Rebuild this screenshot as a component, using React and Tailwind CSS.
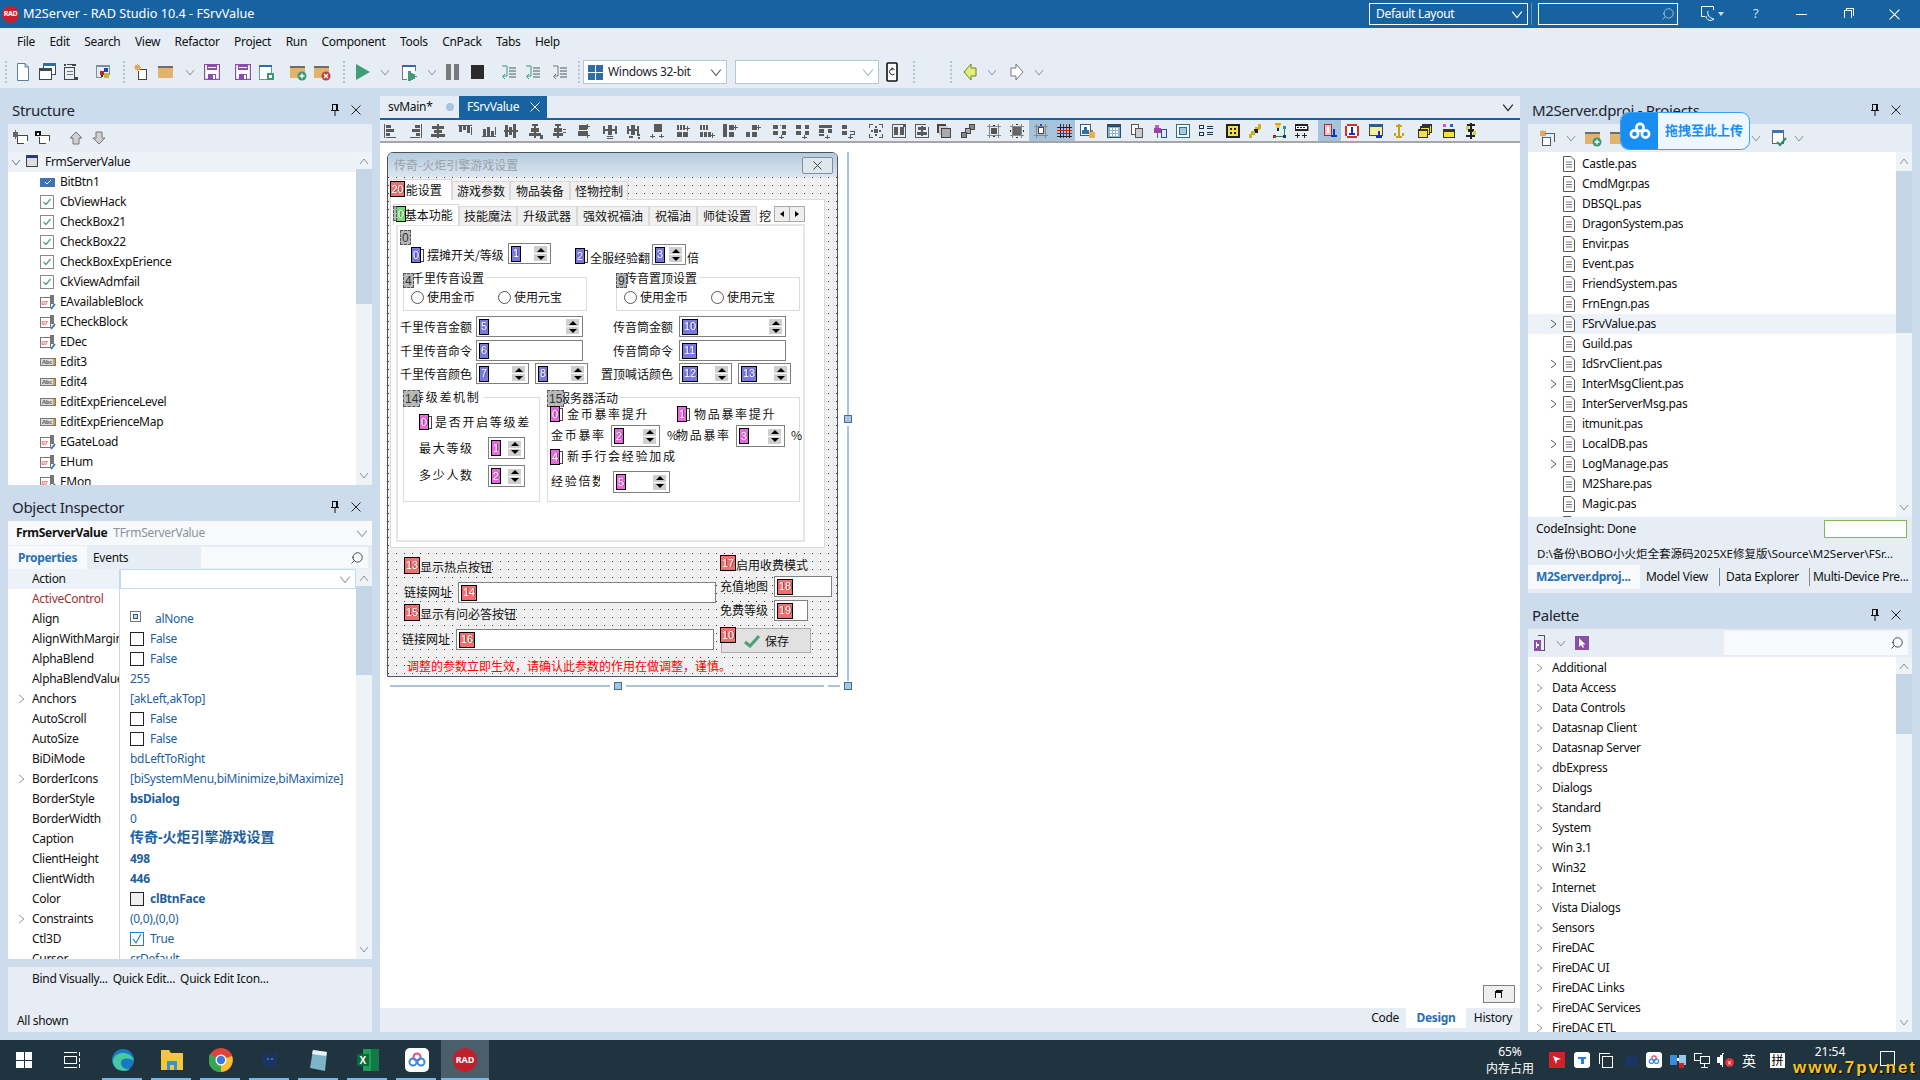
import { Search } from "lucide-react"

// tiny pixel icons: "x y w h color;..."
function Px({ r, size = 16, className = "" }) {
  return (
    <svg width={size} height={size} viewBox="0 0 16 16" shapeRendering="crispEdges" className={"shrink-0 " + className}>
      {r.split(";").map((p, i) => {
        const [x, y, w, h, c] = p.trim().split(" ")
        return <rect key={i} x={x} y={y} width={w} height={h} fill={c || "#5a5a5a"} />
      })}
    </svg>
  )
}

function Chev({ dir = "down", color = "#8a9299", size = 10, className = "" }) {
  const pts = { down: "1,3 5,8 9,3", right: "3,1 8,5 3,9", up: "1,7 5,2 9,7" }[dir]
  return (
    <svg width={size} height={size} viewBox="0 0 10 10" className={"shrink-0 " + className}>
      <polyline points={pts} fill="none" stroke={color} strokeWidth="1" />
    </svg>
  )
}

function CloseX({ color = "#222", size = 10 }) {
  return (
    <svg width={size} height={size} viewBox="0 0 10 10" className="shrink-0">
      <path d="M0.5 0.5L9.5 9.5M9.5 0.5L0.5 9.5" stroke={color} strokeWidth="1" fill="none" />
    </svg>
  )
}

function Pin() {
  return (
    <svg width="8" height="12" viewBox="0 0 8 12" className="shrink-0">
      <path d="M1 0.5H7M1.5 0.5V6.5M5.5 0.5V6.5M6.5 0.5V6.5M0 6.5H8M4 7V12" stroke="#111" fill="none" />
    </svg>
  )
}

function PanelHead({ title, className = "" }) {
  return (
    <div className={"flex items-center justify-between pl-[4px] pr-[11px] text-[15px] text-[#1c2530] " + className}>
      <span>{title}</span>
      <div className="flex items-center gap-[12px]">
        <Pin />
        <CloseX />
      </div>
    </div>
  )
}

function Scroll({ thumbClass }) {
  return (
    <div className="w-[16px] shrink-0 bg-[#eef3f8] relative flex flex-col items-center justify-between py-[5px] self-stretch">
      <Chev dir="up" />
      <div className={"absolute left-0 w-[16px] bg-[#c4d6e6] " + thumbClass} />
      <Chev dir="down" />
    </div>
  )
}

/* ---- main toolbar icons ---- */
function Doc({ color = "#5b7f9e", className = "" }) {
  return (
    <svg width="16" height="18" viewBox="0 0 16 18" className={"shrink-0 " + className}>
      <path d="M2.5 0.5H10L13.5 4V17.5H2.5Z M10 0.5V4H13.5" fill="#fff" stroke={color} />
    </svg>
  )
}
function Win({ badge }) {
  return (
    <svg width="17" height="18" viewBox="0 0 17 18" className="shrink-0">
      <rect x="4.5" y="0.5" width="12" height="11" fill="#fff" stroke="#3d4a55" />
      <rect x="4" y="0" width="13" height="3" fill="#2f6ea5" />
      <rect x="0.5" y="5.5" width="12" height="11" fill="#fff" stroke="#3d4a55" />
      <rect x="0" y="5" width="13" height="3" fill={badge || "#3d4a55"} />
    </svg>
  )
}
function Folder({ mark }) {
  return (
    <svg width="18" height="18" viewBox="0 0 18 18" className="shrink-0">
      <path d="M1 3H7L9 5H16V15H1Z" fill="#e3b26b" />
      <rect x="1" y="3" width="15" height="2" fill="#6d6d6d" />
      {mark === "add" && <circle cx="13" cy="13" r="4.5" fill="#3a9a75" />}
      {mark === "add" && <path d="M13 10.5V15.5M10.5 13H15.5" stroke="#fff" strokeWidth="1.4" />}
      {mark === "del" && <circle cx="13" cy="13" r="4.5" fill="#c04040" />}
      {mark === "del" && <path d="M11 11L15 15M15 11L11 15" stroke="#fff" strokeWidth="1.4" />}
    </svg>
  )
}
function Save({ color = "#8a4fa8" }) {
  return (
    <svg width="16" height="16" viewBox="0 0 16 16" className="shrink-0">
      <rect x="0.5" y="0.5" width="15" height="15" fill="#fff" stroke={color} strokeWidth="1.4" />
      <rect x="3" y="1" width="10" height="5" fill={color} />
      <rect x="4" y="3" width="8" height="1" fill="#fff" />
      <rect x="4" y="10" width="8" height="6" fill={color} />
      <rect x="9" y="11" width="2" height="4" fill="#fff" />
    </svg>
  )
}
function Step({ color = "#3a9a75" }) {
  return (
    <svg width="16" height="16" viewBox="0 0 16 16" className="shrink-0">
      <path d="M1 2H6V12H2" fill="none" stroke={color} />
      <path d="M4 10L1.5 12.5L4 15" fill="none" stroke={color} />
      <path d="M8 4H15M8 7H15M8 10H15M8 13H15" stroke="#4a5a66" />
    </svg>
  )
}
function Tri({ fill = "#3f9e78", w = 16, h = 18 }) {
  return (
    <svg width={w} height={h} viewBox="0 0 16 18" className="shrink-0">
      <path d="M1 1L15 9L1 17Z" fill={fill} />
    </svg>
  )
}

function MainToolbar() {
  return (
    <div className="h-[32px] bg-[#e6edf5] flex items-center">
      <div className="ml-[5px] h-[22px] border-l-2 border-dotted border-[#b9c4cc]" />
      <div className="ml-[8px] flex items-center"><Doc /></div>
      <div className="ml-[8px]"><Win /></div>
      <div className="ml-[6px]"><Px r="2 0 2 2 #444;5 0 6 1 #444;10 0 4 2 #444;2 3 11 1 #444;2 3 1 13 #444;12 3 1 13 #444;2 15 11 1 #444;5 7 6 1 #777;5 10 6 1 #777;13 13 3 3 #444" /></div>
      <div className="ml-[17px]"><Px r="1 1 14 2 #7a8ea0;1 3 1 11 #7a8ea0;14 3 1 8 #7a8ea0;9 4 4 4 #1746c8;5 7 4 4 #c8202a;9 9 5 5 #c9b637;6 11 2 2 #333;1 13 6 1 #7a8ea0" /></div>
      <div className="ml-[12px] h-[22px] border-l-2 border-dotted border-[#b9c4cc]" />
      <div className="ml-[9px] flex items-center"><Px r="1 1 5 5 #e6a85a;3 0 1 7 #e6a85a;0 3 7 1 #e6a85a;6 5 7 1 #444;12 5 1 11 #444;4 15 9 1 #444;4 7 1 9 #444;5 6 7 9 #fff" /></div>
      <div className="ml-[7px]"><Folder /></div>
      <div className="ml-[10px]"><Chev /></div>
      <div className="ml-[9px]"><Save /></div>
      <div className="ml-[15px]"><Save /></div>
      <div className="ml-[7px]"><Px r="1 1 12 2 #2f6ea5;1 3 1 11 #7a8ea0;12 3 1 5 #7a8ea0;2 3 10 11 #fff;1 14 7 1 #7a8ea0;8 8 7 7 #3a9a75;10 10 3 3 #fff" size={17} /></div>
      <div className="ml-[14px]"><Folder mark="add" /></div>
      <div className="ml-[6px]"><Folder mark="del" /></div>
      <div className="ml-[12px] h-[22px] border-l-2 border-dotted border-[#b9c4cc]" />
      <div className="ml-[10px]"><Tri /></div>
      <div className="ml-[9px]"><Chev /></div>
      <div className="ml-[11px]"><Px r="1 1 13 2 #2f6ea5;1 3 1 12 #6a7a88;13 3 1 4 #6a7a88;2 3 11 12 #fff;1 14 5 1 #6a7a88;7 7 2 9 #3f9e78;9 8 2 7 #3f9e78;11 9 2 5 #3f9e78;13 11 2 1 #3f9e78" size={17} /></div>
      <div className="ml-[9px]"><Chev /></div>
      <div className="ml-[9px] flex gap-[3px]"><div className="w-[5px] h-[16px] bg-[#7a7a7a]" /><div className="w-[5px] h-[16px] bg-[#7a7a7a]" /></div>
      <div className="ml-[12px] w-[13px] h-[14px] bg-[#2b2b2b]" />
      <div className="ml-[17px]"><Step /></div>
      <div className="ml-[8px]"><Step /></div>
      <div className="ml-[11px]"><Step color="#777" /></div>
      <div className="ml-[10px] h-[22px] border-l-2 border-dotted border-[#b9c4cc]" />
      <div className="ml-[3px] w-[144px] h-[24px] border border-[#b8c6ce] bg-white flex items-center pl-[4px] pr-[4px] gap-[5px] text-[12px] text-[#1c2530]">
        <div className="w-[15px] h-[15px] grid grid-cols-2 gap-[1px]">
          <div className="bg-[#2f6ea5]" /><div className="bg-[#2f6ea5]" /><div className="bg-[#2f6ea5]" /><div className="bg-[#2f6ea5]" />
        </div>
        <span className="flex-1">Windows 32-bit</span>
        <Chev size={12} color="#666" />
      </div>
      <div className="ml-[8px] w-[144px] h-[24px] border border-[#b8c6ce] bg-white flex items-center justify-end pr-[4px]">
        <Chev size={12} color="#b4bcc2" />
      </div>
      <svg width="12" height="20" viewBox="0 0 12 20" className="ml-[7px] shrink-0">
        <rect x="1" y="1" width="10" height="18" rx="1" fill="#fff" stroke="#111" strokeWidth="1.6" />
        <path d="M8.5 7.5A3 3 0 1 0 8.5 12M6 5.5V8.5" fill="none" stroke="#222" />
      </svg>
      <div className="ml-[15px] h-[22px] border-l-2 border-dotted border-[#b9c4cc]" />
      <div className="ml-[35px] h-[22px] border-l-2 border-dotted border-[#b9c4cc]" />
      <svg width="14" height="18" viewBox="0 0 14 18" className="ml-[11px] shrink-0">
        <path d="M1 9L8 1V5H13V13H8V17Z" fill="#e4ef7a" stroke="#6f7f20" />
      </svg>
      <div className="ml-[10px]"><Chev /></div>
      <svg width="14" height="18" viewBox="0 0 14 18" className="ml-[13px] shrink-0">
        <path d="M13 9L6 1V5H1V13H6V17Z" fill="#fff" stroke="#777" />
      </svg>
      <div className="ml-[10px]"><Chev /></div>
    </div>
  )
}

/* ---- form designer toolbar ---- */
const D = {
  al: "1 1 1 14;3 2 5 3;3 6 8 3;3 10 4 3;3 14 10 1",
  ar: "14 1 1 14;8 2 5 3;5 6 8 3;9 10 4 3;3 14 10 1",
  ac: "7 1 2 14;2 3 12 3;4 7 8 3;1 11 14 3",
  at: "1 2 14 1;2 3 3 6;6 3 3 4;10 3 3 7;14 4 1 8",
  ab: "1 13 14 1;2 6 3 7;6 4 3 9;10 8 3 5;14 4 1 8",
  am: "1 7 14 2;2 2 3 12;6 4 3 8;10 1 3 14",
  sh: "5 1 6 2;7 3 2 12;4 5 8 4;2 10 12 3;13 12 3 4",
  se: "5 1 6 2;7 3 2 12;4 5 8 4;3 10 10 3;13 6 3 1;13 9 3 1",
  sp: "4 2 8 5;3 8 10 5;12 1 1 5;10 3 5 1;12 10 1 5;10 12 5 1",
  hc: "1 3 2 8;13 3 2 8;3 6 10 2;6 2 4 10;5 13 6 1;5 15 6 1",
  hq: "1 3 2 8;11 3 2 8;3 6 8 2;5 2 4 10;3 13 4 2;11 11 3 2;12 14 2 2",
  hs: "4 1 8 8;7 1 1 8;2 11 1 4;0 13 5 1;11 11 1 4;9 13 5 1",
  g1: "1 2 2 5;4 2 2 5;7 2 2 5;1 9 5 5;7 9 5 5;11 3 1 5;9 5 5 1",
  g2: "1 2 2 5;4 2 2 5;7 2 2 5;1 9 3 5;5 9 3 5;9 9 3 5;13 10 1 5;11 12 5 1",
  g3: "1 1 4 13;7 2 5 5;7 9 5 5;13 2 1 5;11 4 5 1",
  g4: "7 2 5 5;1 9 4 5;7 9 5 5;13 2 1 5;11 4 5 1",
  v1: "1 2 5 4;8 2 1 1;10 2 4 4;1 8 5 4;10 8 4 4;1 3 3 1;7 14 5 1;9 12 1 4",
  v2: "1 2 5 4;10 2 4 4;1 8 5 4;10 8 4 4;7 14 5 1;9 12 1 4",
  v3: "1 2 13 3;1 6 5 4;10 6 4 4;1 11 5 2;7 14 5 1;9 12 1 4",
  v4: "1 2 5 4;1 8 5 4;9 8 4 1;13 8 1 4;9 11 4 1;7 14 5 1;9 12 1 4",
  f1: "1 1 4 1;11 1 4 1;1 1 1 4;14 1 1 4;1 14 4 1;11 14 4 1;1 11 1 4;14 11 1 4;6 6 4 4;3 7 2 2;11 7 2 2;7 3 2 2;7 11 2 2",
  f2: "1 1 11 1;1 1 1 14;1 14 14 1;14 4 1 11;3 4 4 8;9 4 4 8;12 1 3 3",
  f3: "1 1 11 1;1 1 1 14;1 14 14 1;14 4 1 11;4 4 8 3;3 9 10 3;7 3 2 10",
  s1: "1 1 9 9 #444;3 3 9 9 #ccc;5 5 10 10 #444;6 6 8 8 #aaa",
  s2: "9 1 6 6 #444;10 2 4 4 #888;5 5 6 6 #444;6 6 4 4 #aaa;1 9 6 6 #444;2 10 4 4 #888",
  c1: "3 1 1 14 #888;12 1 1 14 #888;1 3 14 1 #888;1 12 14 1 #888;5 5 6 6 #555;7 2 2 1 #333;7 13 2 1 #333",
  c2: "3 1 1 14 #888;12 1 1 14 #888;1 3 14 1 #888;1 12 14 1 #888;4 4 8 8 #666;7 1 2 1 #333;7 14 2 1 #333;1 7 1 2 #333;14 7 1 2 #333",
  c3: "3 1 1 14 #888;12 1 1 14 #888;1 3 14 1 #888;1 12 14 1 #888;5 4 6 7 #444;6 5 4 5 #fff;7 1 2 2 #2050c0",
  grid: "4 1 1 14 #222;7 1 1 14 #2040d0;10 1 1 14 #d02020;13 1 1 14 #222;1 4 15 1 #222;1 7 15 1 #d02020;1 10 15 1 #2040d0;1 13 15 1 #222",
  lk: "1 1 11 12 #2a5f96;2 2 9 10 #fff;3 7 7 4 #2f6ea5;5 4 3 3 #2f6ea5;10 9 6 6 #e8b050;12 7 2 2 #a88040",
  cal: "1 1 14 14 #2a4f66;2 4 12 10 #8fb3cc;4 5 2 2 #fff;7 5 2 2 #fff;10 5 2 2 #fff;4 8 2 2 #fff;7 8 2 2 #fff;10 8 2 2 #fff;4 11 2 2 #fff;7 11 2 2 #fff;10 11 2 2 #fff",
  cp: "2 1 8 11 #555;3 2 6 9 #fff;6 5 8 10 #555;7 6 6 8 #ccc",
  fl: "3 2 4 4 #c060c0;2 5 7 5 #a040a8;5 10 1 5 #2e7d32;9 6 6 9 #2a4f96;10 7 4 7 #dfe8f5",
  sq: "1 1 14 14 #28708a;2 2 12 12 #fff;4 4 8 8 #28708a;5 5 6 6 #a8c8e0",
  ls: "1 2 5 4 #135;1 9 5 4 #135;2 3 3 2 #fff;2 10 3 2 #fff;9 3 6 1 #135;9 5 6 1 #135;9 9 6 1 #135;9 11 6 1 #135",
  yl: "1 1 14 14 #222;3 3 10 10 #f0e040;5 5 2 2 #222;9 5 2 2 #222;5 9 2 2 #222;9 9 2 2 #222",
  fk: "11 1 3 5 #c8b020;8 4 5 3 #c8b020;7 6 4 4 #222;4 8 4 4 #c8b020;2 11 3 4 #c8b020",
  tr: "4 0 6 2 #c8b020;5 2 4 3 #e8d040;6 5 2 3 #222;12 3 3 3 #10a0a0;2 12 3 3 #c01040;12 12 3 3 #1030c0;3 13 9 1 #2a8a2a;13 6 1 6 #2a8a2a",
  mn: "1 1 13 7 #222;2 3 11 3 #fff;3 4 2 1 #222;6 4 2 1 #222;9 4 2 1 #222;3 10 1 5 #222;1 12 5 1 #222;10 10 1 5 #222;8 12 5 1 #222;14 3 1 5 #888",
  a0: "2 1 8 12 #903030;3 2 6 10 #f0c0c0;5 4 2 6 #fff;11 7 2 7 #1030c0;9 12 6 2 #1030c0;11 6 2 2 #1030c0",
  a1: "3 1 10 14 #d03030;1 3 14 10 #d03030;3 3 10 10 #fff;7 4 2 8 #1030c0;5 10 6 2 #1030c0",
  a2: "1 1 14 12 #444;1 1 14 3 #2a5f96;2 4 12 8 #f5f0a0;10 8 2 7 #1030c0;8 13 6 2 #1030c0",
  a3: "7 1 2 12 #c8a010;5 2 6 2 #c8a010;3 10 2 3 #c8a010;11 10 2 3 #c8a010;5 13 6 2 #c8a010",
  a4: "5 1 10 9 #333;6 3 8 6 #f5e040;3 3 10 9 #333;4 5 8 6 #f5e040;1 6 10 9 #333;2 8 8 6 #f5e040",
  a5: "2 1 3 3 #d050d0;9 1 3 3 #3060d0;2 6 12 9 #333;2 6 12 3 #333;3 9 10 5 #f5e040",
  a6: "4 1 8 2 #222;3 3 3 4 #d0d040;5 6 6 3 #222;10 8 3 4 #d0d040;3 12 9 2 #222;7 0 2 16 #222",
}
// icon, centre x in the window, pressed
const designer = [
  ["al", 390], ["ar", 414], ["ac", 437], ["at", 464], ["ab", 488], ["am", 510], ["sh", 534], ["se", 557], ["sp", 582], ["hc", 609], ["hq", 633],
  ["hs", 657], ["g1", 683], ["g2", 706], ["g3", 729], ["g4", 752], ["v1", 779], ["v2", 802], ["v3", 825], ["v4", 848], ["f1", 875], ["f2", 898], ["f3", 921],
  ["s1", 943], ["s2", 967], ["c1", 993], ["c2", 1016], ["c3", 1040, 1], ["grid", 1063, 1], ["lk", 1086], ["cal", 1113], ["cp", 1136], ["fl", 1159], ["sq", 1182], ["ls", 1205],
  ["yl", 1232], ["fk", 1254], ["tr", 1278], ["mn", 1301], ["a0", 1329, 1], ["a1", 1351], ["a2", 1375], ["a3", 1398], ["a4", 1424], ["a5", 1448], ["a6", 1470],
]

function DesignerToolbar() {
  return (
    <div className="h-[23px] bg-[#e6edf5] border-b-2 border-[#a6a6a6] flex items-stretch">
      {designer.map(([k, x, on], i) => (
        <div
          key={i}
          className={"w-[23px] shrink-0 flex items-center justify-center " + (on ? "bg-[#a6c3dc]" : "")}
          style={{ marginLeft: i === 0 ? -1 : x - designer[i - 1][1] - 23 }}
        >
          <Px r={D[k]} />
        </div>
      ))}
    </div>
  )
}

/* ---- form controls ---- */
const badgeColor = {
  blue: "bg-[#7878e0]",
  pink: "bg-[#e868e0]",
  red: "bg-[#ee7070]",
  green: "bg-[#70e070]",
}

function Badge({ n, color = "blue", className = "" }) {
  return (
    <div className={"h-[16px] px-[1px] min-w-[10px] border border-black flex items-center justify-center text-[11px] leading-none text-white [text-shadow:1px_0_0_rgba(0,0,0,0.55)] font-['Liberation_Sans',sans-serif] shrink-0 " + badgeColor[color] + " " + className}>
      {n}
    </div>
  )
}

function GrayBadge({ n, className }) {
  return (
    <div className={"absolute h-[15px] px-[1px] min-w-[10px] bg-[#b8b8b8] border border-dashed border-[#555] flex items-center justify-center text-[12px] leading-none text-[#333] font-['Liberation_Sans',sans-serif] " + className}>
      {n}
    </div>
  )
}

function Spinner() {
  return (
    <div className="flex flex-col gap-[1px] w-[13px] shrink-0">
      <div className="h-[7px] bg-[#cfcfcf] flex items-center justify-center">
        <div className="border-x-[4px] border-x-transparent border-b-[4px] border-b-black" />
      </div>
      <div className="h-[7px] bg-[#cfcfcf] flex items-center justify-center">
        <div className="border-x-[4px] border-x-transparent border-t-[4px] border-t-black" />
      </div>
    </div>
  )
}

function Field({ n, color, className, spin = true }) {
  return (
    <div className={"absolute h-[21px] border border-[#808080] bg-white flex items-center justify-between pl-[2px] pr-[3px] " + className}>
      <Badge n={n} color={color} />
      {spin && <Spinner />}
    </div>
  )
}

function Lbl({ className = "", children }) {
  return <div className={"absolute whitespace-nowrap text-[12px] leading-[14px] text-[#111] " + className}>{children}</div>
}

function Check({ n, color, className }) {
  return (
    <div className={"absolute flex items-center " + className}>
      <Badge n={n} color={color} />
      <div className="w-[3px] h-[13px] border border-l-0 border-[#444]" />
    </div>
  )
}

function Radio({ className, label }) {
  return (
    <div className={"absolute flex items-center gap-[3px] " + className}>
      <div className="w-[13px] h-[13px] rounded-full border border-[#555] bg-white" />
      <span className="text-[12px] leading-[14px] text-[#111]">{label}</span>
    </div>
  )
}

function Group({ className }) {
  return <div className={"absolute border border-[#dcdcdc] " + className} />
}

function Tab({ w, active, children, h }) {
  return (
    <div className={"flex items-center justify-center text-[12px] text-[#111] border border-[#d9d9d9] border-b-0 " + w + " " + h + " " + (active ? "bg-white" : "bg-[#f0f0f0]")}>
      {children}
    </div>
  )
}

function DesignForm() {
  return (
    <div className="relative w-[451px] h-[525px] ml-[7px] mt-[9px] border border-[#4a5560] rounded-t-[6px] bg-[#f0f0f0] bg-[conic-gradient(from_270deg_at_1px_1px,#333_25%,transparent_0)] bg-[size:8px_8px] font-['Noto_Sans_CJK_SC','Noto_Sans',sans-serif] tracking-normal overflow-hidden">
      {/* caption */}
      <div className="absolute left-0 top-0 w-full h-[24px] bg-gradient-to-b from-[#b5cbdf] to-[#dbe6f0] flex items-center justify-between pl-[6px] pr-[4px]">
        <span className="text-[12px] text-[#99a1a8]">传奇-火炬引擎游戏设置</span>
        <div className="w-[31px] h-[17px] border border-[#7f8d9a] rounded-[2px] bg-[#dfe7ee] flex items-center justify-center">
          <CloseX color="#333" size={9} />
        </div>
      </div>

      {/* outer pages */}
      <div className="absolute left-[2px] top-[46px] w-[435px] h-[349px] bg-white border border-[#dcdcdc]" />
      <div className="absolute left-[2px] top-[26px] flex items-end">
        <Tab w="w-[62px]" h="h-[21px]" active>&nbsp;&nbsp;能设置</Tab>
        <Tab w="w-[58px]" h="h-[19px]">游戏参数</Tab>
        <Tab w="w-[60px]" h="h-[19px]">物品装备</Tab>
        <Tab w="w-[58px]" h="h-[19px]">怪物控制</Tab>
      </div>
      <Badge n="20" color="red" className="absolute left-[2px] top-[28px] w-[15px]" />

      {/* inner pages */}
      <div className="absolute left-[8px] top-[71px] w-[409px] h-[318px] bg-white border-2 border-[#e6e6e6]" />
      <div className="absolute left-[5px] top-[51px] flex items-end">
        <Tab w="w-[66px]" h="h-[21px]" active>&nbsp;&nbsp;基本功能</Tab>
        <Tab w="w-[58px]" h="h-[19px]">技能魔法</Tab>
        <Tab w="w-[60px]" h="h-[19px]">升级武器</Tab>
        <Tab w="w-[72px]" h="h-[19px]">强效祝福油</Tab>
        <Tab w="w-[48px]" h="h-[19px]">祝福油</Tab>
        <Tab w="w-[60px]" h="h-[19px]">师徒设置</Tab>
        <div className="w-[17px] h-[19px] overflow-hidden text-[12px] pl-[2px] pt-[1px] text-[#111]">挖</div>
      </div>
      <div className="absolute left-[386px] top-[53px] w-[31px] h-[16px] flex border border-[#aaa] bg-[#eee]">
        <div className="flex-1 border-r border-[#aaa] flex items-center justify-center"><div className="border-y-[3px] border-y-transparent border-r-[4px] border-r-black" /></div>
        <div className="flex-1 flex items-center justify-center"><div className="border-y-[3px] border-y-transparent border-l-[4px] border-l-black" /></div>
      </div>
      <Badge n="0" color="green" className="absolute left-[8px] top-[53px]" />
      <GrayBadge n="" className="left-[5px] top-[53px] !min-w-[3px] !w-[4px]" />

      <GrayBadge n="0" className="left-[12px] top-[77px]" />
      <Check n="0" className="left-[23px] top-[94px]" />
      <Lbl className="left-[39px] top-[95px]">摆摊开关/等级</Lbl>
      <Field n="1" className="left-[120px] top-[90px] w-[43px]" />
      <Check n="2" className="left-[187px] top-[95px]" />
      <Lbl className="left-[202px] top-[98px]">全服经验翻</Lbl>
      <Field n="3" className="left-[264px] top-[91px] w-[34px]" />
      <Lbl className="left-[299px] top-[98px]">倍</Lbl>

      <Group className="left-[15px] top-[124px] w-[184px] h-[34px]" />
      <Lbl className="left-[24px] top-[118px] bg-white pr-[2px]">千里传音设置</Lbl>
      <GrayBadge n="4" className="left-[15px] top-[120px]" />
      <Radio className="left-[23px] top-[137px]" label="使用金币" />
      <Radio className="left-[110px] top-[137px]" label="使用元宝" />
      <Group className="left-[228px] top-[124px] w-[184px] h-[34px]" />
      <Lbl className="left-[237px] top-[118px] bg-white pr-[2px]">传音置顶设置</Lbl>
      <GrayBadge n="9" className="left-[228px] top-[120px]" />
      <Radio className="left-[236px] top-[137px]" label="使用金币" />
      <Radio className="left-[323px] top-[137px]" label="使用元宝" />

      <Lbl className="left-[12px] top-[167px]">千里传音金额</Lbl>
      <Field n="5" className="left-[88px] top-[163px] w-[107px]" />
      <Lbl className="left-[225px] top-[167px]">传音筒金额</Lbl>
      <Field n="10" className="left-[291px] top-[163px] w-[107px]" />
      <Lbl className="left-[12px] top-[191px]">千里传音命令</Lbl>
      <Field n="6" spin={false} className="left-[88px] top-[187px] w-[107px]" />
      <Lbl className="left-[225px] top-[191px]">传音筒命令</Lbl>
      <Field n="11" spin={false} className="left-[291px] top-[187px] w-[107px]" />
      <Lbl className="left-[12px] top-[214px]">千里传音颜色</Lbl>
      <Field n="7" className="left-[88px] top-[210px] w-[53px]" />
      <Field n="8" className="left-[147px] top-[210px] w-[53px]" />
      <Lbl className="left-[213px] top-[214px]">置顶喊话颜色</Lbl>
      <Field n="12" className="left-[291px] top-[210px] w-[53px]" />
      <Field n="13" className="left-[350px] top-[210px] w-[53px]" />

      <Group className="left-[15px] top-[244px] w-[137px] h-[105px]" />
      <Lbl className="left-[24px] top-[237px] bg-white pr-[2px] tracking-[1.7px]">等级差机制</Lbl>
      <GrayBadge n="14" className="left-[15px] top-[237px] h-[17px]" />
      <Group className="left-[159px] top-[244px] w-[253px] h-[105px]" />
      <Lbl className="left-[170px] top-[238px] bg-white pr-[2px]">服务器活动</Lbl>
      <GrayBadge n="15" className="left-[159px] top-[237px] h-[17px]" />

      <Check n="0" color="pink" className="left-[31px] top-[261px]" />
      <Lbl className="left-[47px] top-[262px] tracking-[1.7px]">是否开启等级差</Lbl>
      <Lbl className="left-[31px] top-[288px] tracking-[1.7px]">最大等级</Lbl>
      <Field n="1" color="pink" className="left-[100px] top-[284px] w-[37px] !h-[22px]" />
      <Lbl className="left-[31px] top-[315px] tracking-[1.7px]">多少人数</Lbl>
      <Field n="2" color="pink" className="left-[100px] top-[312px] w-[37px] !h-[22px]" />

      <Check n="0" color="pink" className="left-[162px] top-[253px]" />
      <Lbl className="left-[179px] top-[254px] tracking-[1.7px]">金币暴率提升</Lbl>
      <Check n="1" color="pink" className="left-[289px] top-[253px]" />
      <Lbl className="left-[306px] top-[254px] tracking-[1.7px]">物品暴率提升</Lbl>
      <Lbl className="left-[163px] top-[275px] tracking-[1.7px]">金币暴率</Lbl>
      <Field n="2" color="pink" className="left-[223px] top-[272px] w-[49px] !h-[22px]" />
      <Lbl className="left-[279px] top-[275px]">%</Lbl>
      <Lbl className="left-[288px] top-[275px] tracking-[1.7px]">物品暴率</Lbl>
      <Field n="3" color="pink" className="left-[348px] top-[272px] w-[49px] !h-[22px]" />
      <Lbl className="left-[403px] top-[275px]">%</Lbl>
      <Check n="4" color="pink" className="left-[162px] top-[296px]" />
      <Lbl className="left-[179px] top-[296px] tracking-[1.7px]">新手行会经验加成</Lbl>
      <Lbl className="left-[163px] top-[321px] w-[49px] overflow-hidden tracking-[1.7px]">经验倍数</Lbl>
      <Field n="5" color="pink" className="left-[225px] top-[318px] w-[57px] !h-[22px]" />

      {/* bottom part */}
      <Badge n="13" color="red" className="absolute left-[16px] top-[404px] w-[16px] !h-[17px]" />
      <Lbl className="left-[32px] top-[407px] bg-[#f0f0f0]">显示热点按钮</Lbl>
      <Lbl className="left-[16px] top-[432px] bg-[#f0f0f0]">链接网址</Lbl>
      <Field n="14" color="red" spin={false} className="left-[70px] top-[429px] w-[258px]" />
      <Badge n="15" color="red" className="absolute left-[16px] top-[451px] w-[16px] !h-[17px]" />
      <Lbl className="left-[32px] top-[454px] bg-[#f0f0f0]">显示有问必答按钮</Lbl>
      <Lbl className="left-[14px] top-[479px] bg-[#f0f0f0]">链接网址</Lbl>
      <Field n="16" color="red" spin={false} className="left-[68px] top-[476px] w-[258px]" />
      <Lbl className="left-[19px] top-[506px] text-[#ff0000] bg-[#f0f0f0]">调整的参数立即生效，请确认此参数的作用在做调整，谨慎。</Lbl>

      <Badge n="17" color="red" className="absolute left-[332px] top-[402px] w-[16px]" />
      <Lbl className="left-[348px] top-[405px] bg-[#f0f0f0]">启用收费模式</Lbl>
      <Lbl className="left-[332px] top-[426px] bg-[#f0f0f0]">充值地图</Lbl>
      <Field n="18" color="red" spin={false} className="left-[386px] top-[423px] w-[58px]" />
      <Lbl className="left-[332px] top-[450px] bg-[#f0f0f0]">免费等级</Lbl>
      <Field n="19" color="red" spin={false} className="left-[386px] top-[447px] w-[34px]" />
      <div className="absolute left-[333px] top-[475px] w-[90px] h-[25px] bg-[#e1e1e1] border border-[#adadad] flex items-center pl-[22px] gap-[5px] text-[12px] text-[#111]">
        <svg width="16" height="14" viewBox="0 0 16 14" className="shrink-0">
          <path d="M1 8L6 12L15 2" fill="none" stroke="#4f9e7c" strokeWidth="3" />
        </svg>
        <span>保存</span>
      </div>
      <Badge n="10" color="red" className="absolute left-[332px] top-[474px] w-[16px]" />
    </div>
  )
}

function Handle({ className }) {
  return <div className={"absolute w-[8px] h-[8px] bg-[#a9c4de] border border-[#3f6f9f] " + className} />
}

function Designer() {
  return (
    <div className="relative flex-1 bg-white overflow-hidden">
      <DesignForm />
      {/* selection frame */}
      <div className="absolute left-[467px] top-[9px] h-[263px] border-l-2 border-[#a9c4de]" />
      <div className="absolute left-[467px] top-[283px] h-[255px] border-l-2 border-[#a9c4de]" />
      <div className="absolute left-[10px] top-[542px] w-[220px] border-t-2 border-[#a9c4de]" />
      <div className="absolute left-[246px] top-[542px] w-[198px] border-t-2 border-[#a9c4de]" />
      <div className="absolute left-[448px] top-[542px] w-[12px] border-t-2 border-[#a9c4de]" />
      <Handle className="left-[464px] top-[272px]" />
      <Handle className="left-[234px] top-[539px]" />
      <Handle className="left-[464px] top-[539px]" />
      <div className="absolute left-[1103px] top-[842px] w-[32px] h-[18px] border border-[#808080] bg-[#eeeeee] flex items-center justify-center">
        <Px r="5 3 8 1 #111;5 3 1 2 #111;12 3 1 7 #111;3 5 8 8 #111;4 7 6 5 #fff" size={14} />
      </div>
    </div>
  )
}

/* ---- trees ---- */
function IconCheck() {
  return (
    <div className="w-[14px] h-[14px] border border-[#8a8a8a] flex items-center justify-center">
      <svg width="10" height="10" viewBox="0 0 10 10"><path d="M1.5 5L4 7.5L8.5 2" fill="none" stroke="#4f9e7c" strokeWidth="1.2" /></svg>
    </div>
  )
}
function IconBtn() {
  return (
    <div className="w-[15px] h-[9px] bg-[#3f74b4] flex items-center justify-center">
      <svg width="8" height="6" viewBox="0 0 8 6"><path d="M1 3L3 5L7 1" fill="none" stroke="#fff" /></svg>
    </div>
  )
}
function Icon07() {
  return (
    <svg width="16" height="16" viewBox="0 0 16 16">
      <rect x="0.5" y="3.5" width="10" height="10" fill="#fff" stroke="#777" />
      <rect x="10" y="1" width="4" height="9" fill="#777" />
      <text x="1.5" y="11" fontSize="6" fontWeight="bold" fill="#e0605a" fontFamily="Liberation Sans">07</text>
      <path d="M11 15L15 10" stroke="#3f74b4" strokeWidth="2" />
    </svg>
  )
}
function IconAbc() {
  return (
    <div className="w-[16px] h-[8px] border border-[#777] bg-[#ddd] flex items-center justify-between pl-[1px] text-[6px] leading-none text-[#666] font-bold overflow-hidden">
      Abc<div className="w-[2px] h-full bg-[#e0a040]" />
    </div>
  )
}

const structure = [
  ["BitBtn1", IconBtn], ["CbViewHack", IconCheck], ["CheckBox21", IconCheck], ["CheckBox22", IconCheck], ["CheckBoxExpErience", IconCheck],
  ["CkViewAdmfail", IconCheck], ["EAvailableBlock", Icon07], ["ECheckBlock", Icon07], ["EDec", Icon07], ["Edit3", IconAbc], ["Edit4", IconAbc],
  ["EditExpErienceLevel", IconAbc], ["EditExpErienceMap", IconAbc], ["EGateLoad", Icon07], ["EHum", Icon07], ["EMon", Icon07],
]

function StructurePanel() {
  return (
    <div className="flex flex-col h-[389px]">
      <PanelHead title="Structure" className="h-[28px] shrink-0" />
      <div className="h-[28px] shrink-0 bg-[#e6edf5] flex items-center pl-[5px] gap-[6px]">
        <Px r="0 2 5 5 #666;2 0 1 9 #666;0 4 5 1 #666;5 5 10 1 #444;14 6 1 5 #444;10 10 5 1 #444;4 7 1 6 #444;4 13 7 1 #444;10 11 1 3 #444;5 6 9 7 #fff" />
        <Px r="0 1 6 5 #111;2 3 2 2 #fff;5 5 10 1 #444;14 6 1 5 #444;10 10 5 1 #444;4 7 1 6 #444;4 13 7 1 #444;5 6 9 7 #fff;1 2 4 1 #111;1 5 4 1 #111" />
        <svg width="14" height="14" viewBox="0 0 14 14" className="ml-[12px] shrink-0"><path d="M7 1L13 7H10V13H4V7H1Z" fill="#cfcfcf" stroke="#777" /></svg>
        <svg width="14" height="14" viewBox="0 0 14 14" className="ml-[3px] shrink-0"><path d="M7 13L13 7H10V1H4V7H1Z" fill="#cfcfcf" stroke="#777" /></svg>
      </div>
      <div className="flex-1 min-h-0 flex bg-white overflow-hidden">
        <div className="flex-1 overflow-hidden">
          <div className="h-[20px] bg-[#edf2f9] flex items-center pl-[3px] gap-[5px] text-[12px] text-[#111]">
            <Chev color="#777" />
            <Px r="0 0 14 14 #444;1 1 12 2 #1a3a8a;1 3 12 10 #dddddd" size={14} />
            <span>FrmServerValue</span>
          </div>
          {structure.map(([name, Ic]) => (
            <div key={name} className="h-[20px] flex items-center text-[12px] text-[#111]">
              <div className="ml-[32px] w-[20px] flex items-center"><Ic /></div>
              <span>{name}</span>
            </div>
          ))}
        </div>
        <Scroll thumbClass="top-[17px] h-[135px]" />
      </div>
    </div>
  )
}

const Val = ({ children, bold }) => <span className={"text-[#1f5f9e] " + (bold ? "font-bold" : "")}>{children}</span>
const Box = ({ on }) => (
  <div className={"w-[14px] h-[14px] border flex items-center justify-center shrink-0 " + (on ? "border-[#1f7fd0]" : "border-[#222]")}>
    {on && <svg width="12" height="12" viewBox="0 0 12 12"><path d="M2 6L5 10L10 1" fill="none" stroke="#1f7fd0" strokeWidth="1.2" /></svg>}
  </div>
)
const BoolV = ({ on }) => (
  <div className="flex items-center gap-[6px]"><Box on={on} /><Val>{on ? "True" : "False"}</Val></div>
)

const props = [
  { n: "ActiveControl", red: true },
  { n: "Align", v: <div className="flex items-center gap-[9px]"><Px r="0 0 11 1 #777;0 10 11 1 #777;0 0 1 11 #777;10 0 1 11 #777;3 3 5 5 #35507a;4 4 3 3 #cfd8e6" size={16} /><Val>alNone</Val></div> },
  { n: "AlignWithMargins", v: <BoolV /> },
  { n: "AlphaBlend", v: <BoolV /> },
  { n: "AlphaBlendValue", v: <Val>255</Val> },
  { n: "Anchors", ex: true, v: <Val>[akLeft,akTop]</Val> },
  { n: "AutoScroll", v: <BoolV /> },
  { n: "AutoSize", v: <BoolV /> },
  { n: "BiDiMode", v: <Val>bdLeftToRight</Val> },
  { n: "BorderIcons", ex: true, v: <Val>[biSystemMenu,biMinimize,biMaximize]</Val> },
  { n: "BorderStyle", v: <Val bold>bsDialog</Val> },
  { n: "BorderWidth", v: <Val>0</Val> },
  { n: "Caption", v: <div className="text-[#1f5f9e] font-bold text-[14px] leading-[16px] tracking-normal mb-[4px]">传奇-火炬引擎游戏设置</div> },
  { n: "ClientHeight", v: <Val bold>498</Val> },
  { n: "ClientWidth", v: <Val bold>446</Val> },
  { n: "Color", v: <div className="flex items-center gap-[6px]"><div className="w-[14px] h-[14px] border border-[#222] bg-[#f0f0f0]" /><Val bold>clBtnFace</Val></div> },
  { n: "Constraints", ex: true, v: <Val>(0,0),(0,0)</Val> },
  { n: "Ctl3D", v: <BoolV on /> },
  { n: "Cursor", v: <Val>crDefault</Val> },
]

function ObjectInspector() {
  return (
    <div className="flex-1 min-h-0 flex flex-col">
      <PanelHead title="Object Inspector" className="h-[36px] shrink-0 pt-[8px]" />
      <div className="h-[24px] shrink-0 bg-[#f7f9fc] flex items-center pl-[8px] pr-[4px] text-[12px]">
        <span className="font-bold text-[#111]">FrmServerValue</span>
        <span className="ml-[6px] text-[#8a929a] flex-1">TFrmServerValue</span>
        <Chev size={12} color="#a0a8b0" />
      </div>
      <div className="h-[24px] shrink-0 bg-[#e6edf5] flex items-stretch text-[12px] pt-[1px]">
        <div className="w-[79px] bg-[#f7f9fc] flex items-center pl-[10px] font-bold text-[#2a6fb0]">Properties</div>
        <div className="pl-[6px] flex items-center text-[#111]">Events</div>
        <div className="ml-auto mr-[4px] my-[1px] w-[167px] bg-[#f7f9fc] flex items-center justify-end pr-[4px]">
          <Search size={14} className="text-[#333] -scale-x-100" strokeWidth={1.5} />
        </div>
      </div>
      <div className="h-[390px] shrink-0 flex bg-white overflow-hidden text-[12px] text-[#111]">
        <div className="flex-1 overflow-hidden relative">
          <div className="h-[20px] flex items-stretch">
            <div className="w-[111px] bg-[#edf2f9] pl-[24px] flex items-center">Action</div>
            <div className="flex-1 border border-[#bcdcf5] ml-[1px] flex items-center justify-end pr-[4px]"><Chev size={12} color="#a0a8b0" /></div>
          </div>
          {props.map((p) => (
            <div key={p.n} className="h-[20px] flex items-center">
              <div className="w-[8px] pl-[8px] shrink-0 flex items-center">{p.ex && <Chev dir="right" size={10} color="#999" />}</div>
              <div className={"w-[103px] pl-[16px] overflow-hidden whitespace-nowrap " + (p.red ? "text-[#a03030]" : "")}>{p.n}</div>
              <div className="pl-[11px] whitespace-nowrap">{p.v}</div>
            </div>
          ))}
          <div className="absolute left-[111px] top-0 bottom-0 w-px bg-[#d0d6dc]" />
        </div>
        <Scroll thumbClass="top-[17px] h-[89px]" />
      </div>
      <div className="h-[8px] shrink-0" />
      <div className="flex-1 bg-[#e6edf5] flex flex-col justify-between text-[12px] text-[#111] pb-[2px] pt-[3px]">
        <div className="pl-[24px] flex gap-[5px]">
          <span>Bind Visually...</span>
          <span>Quick Edit...</span>
          <span>Quick Edit Icon...</span>
        </div>
        <div className="pl-[9px]">All shown</div>
      </div>
    </div>
  )
}

const files = [
  ["Castle.pas"], ["CmdMgr.pas"], ["DBSQL.pas"], ["DragonSystem.pas"], ["Envir.pas"], ["Event.pas"], ["FriendSystem.pas"], ["FrnEngn.pas"],
  ["FSrvValue.pas", 2], ["Guild.pas"], ["IdSrvClient.pas", 1], ["InterMsgClient.pas", 1], ["InterServerMsg.pas", 1], ["itmunit.pas"],
  ["LocalDB.pas", 1], ["LogManage.pas", 1], ["M2Share.pas"], ["Magic.pas"], ["Mission.pas"],
]

function PasIcon() {
  return (
    <svg width="12" height="16" viewBox="0 0 12 16" className="shrink-0">
      <path d="M0.5 0.5H8L11.5 4V15.5H0.5Z" fill="#fff" stroke="#555" />
      <path d="M3 6H9M3 8.5H9M3 11H9" stroke="#777" />
    </svg>
  )
}

function ProjectsPanel() {
  return (
    <div className="flex flex-col h-[497px] shrink-0">
      <PanelHead title="M2Server.dproj - Projects" className="h-[28px] shrink-0" />
      <div className="h-[28px] shrink-0 bg-[#e6edf5] flex items-center pl-[12px]">
        <Px r="0 1 6 5 #e6a85a;2 0 1 7 #e6a85a;5 3 10 1 #2f6ea5;14 3 1 9 #555;2 7 9 1 #2f6ea5;2 7 1 9 #555;2 15 9 1 #555;10 7 1 9 #555;3 8 7 7 #fff" />
        <div className="ml-[10px]"><Chev /></div>
        <div className="ml-[8px]"><Folder mark="add" /></div>
        <div className="ml-[7px]"><Folder /></div>
        <div className="ml-[124px]"><Chev /></div>
        <svg width="16" height="18" viewBox="0 0 16 18" className="ml-[10px] shrink-0">
          <rect x="1.5" y="1.5" width="11" height="13" fill="#fff" stroke="#666" />
          <rect x="1" y="1" width="12" height="3" fill="#3f74b4" />
          <path d="M6 13L9 16L15 9" fill="none" stroke="#2f8f63" strokeWidth="2" />
        </svg>
        <div className="ml-[7px]"><Chev /></div>
      </div>
      <div className="h-[365px] shrink-0 flex bg-white overflow-hidden">
        <div className="flex-1 overflow-hidden pt-[2px]">
          {files.map(([f, ex]) => (
            <div key={f} className={"h-[20px] flex items-center text-[12px] text-[#111] " + (ex === 2 ? "bg-[#edf2f9]" : "")}>
              <div className="w-[35px] pl-[20px] shrink-0">{ex && <Chev dir="right" color="#555" />}</div>
              <PasIcon />
              <span className="ml-[7px]">{f}</span>
            </div>
          ))}
        </div>
        <Scroll thumbClass="top-[19px] h-[162px]" />
      </div>
      <div className="h-[76px] shrink-0 bg-[#e6edf5] flex flex-col text-[12px] text-[#111]">
        <div className="h-[24px] flex items-center justify-between pl-[8px] pr-[5px]">
          <span>CodeInsight: Done</span>
          <div className="w-[83px] h-[18px] bg-white border border-[#82b853]" />
        </div>
        <div className="h-[24px] flex items-center pl-[9px] pt-[2px] whitespace-nowrap overflow-hidden tracking-normal text-[11.5px]">D:\备份\BOBO小火炬全套源码2025XE修复版\Source\M2Server\FSr...</div>
        <div className="h-[24px] flex items-stretch">
          <div className="w-[112px] bg-[#f7f9fc] flex items-center pl-[8px] font-bold text-[#2a6fb0]">M2Server.dproj...</div>
          <div className="w-[79px] flex items-center pl-[6px]">Model View</div>
          <div className="w-[87px] flex items-center pl-[6px]"><span className="border-l border-[#888] pl-[6px] -ml-[6px]">Data Explorer</span></div>
          <div className="flex items-center pl-[3px] whitespace-nowrap"><span className="border-l border-[#888] pl-[3px]">Multi-Device Pre...</span></div>
        </div>
      </div>
    </div>
  )
}

const palette = ["Additional", "Data Access", "Data Controls", "Datasnap Client", "Datasnap Server", "dbExpress", "Dialogs", "Standard", "System", "Win 3.1", "Win32", "Internet", "Vista Dialogs", "Sensors", "FireDAC", "FireDAC UI", "FireDAC Links", "FireDAC Services", "FireDAC ETL"]

function PalettePanel() {
  return (
    <div className="flex-1 min-h-0 flex flex-col">
      <PanelHead title="Palette" className="h-[36px] shrink-0 pt-[8px]" />
      <div className="h-[28px] shrink-0 bg-[#e6edf5] flex items-center pl-[6px]">
        <Px r="4 0 7 1 #555;10 1 1 15 #555;4 15 7 1 #555;0 5 7 11 #8a4fa8;2 7 1 6 #fff;3 9 2 2 #fff" />
        <div className="ml-[6px]"><Chev /></div>
        <div className="ml-[9px] w-[14px] h-[14px] bg-[#8a4fa8] flex items-center justify-center">
          <svg width="8" height="10" viewBox="0 0 8 10"><path d="M1 0V9L3 7L5 10L6 9L4.5 6.5H7.5Z" fill="#fff" /></svg>
        </div>
        <div className="ml-auto mr-[4px] w-[184px] h-[24px] bg-[#f7f9fc] flex items-center justify-end pr-[4px]">
          <Search size={14} className="text-[#333] -scale-x-100" strokeWidth={1.5} />
        </div>
      </div>
      <div className="flex-1 min-h-0 flex bg-white overflow-hidden">
        <div className="flex-1 overflow-hidden pt-[1px]">
          {palette.map((p) => (
            <div key={p} className="h-[20px] flex items-center pl-[6px] gap-[8px] text-[12px] text-[#111]">
              <Chev dir="right" color="#999" />
              <span>{p}</span>
            </div>
          ))}
        </div>
        <Scroll thumbClass="top-[17px] h-[60px]" />
      </div>
    </div>
  )
}

function Taskbar() {
  return (
    <div className="relative h-[40px] bg-[#20343f] flex items-stretch text-white tracking-normal">
      <div className="w-[48px] flex items-center justify-center">
        <div className="grid grid-cols-2 gap-[1px] w-[16px] h-[16px]">
          <div className="bg-white" /><div className="bg-white" /><div className="bg-white" /><div className="bg-white" />
        </div>
      </div>
      <div className="w-[48px] flex items-center justify-center">
        <Px r="0 0 13 1 #fff;0 15 13 1 #fff;0 4 1 8 #fff;12 4 1 8 #fff;0 4 13 1 #fff;0 11 13 1 #fff;15 0 1 4 #fff;15 6 1 4 #fff;15 12 1 4 #fff" />
      </div>
      <div className="w-[2px]" />
      {[
        <svg width="24" height="24" viewBox="0 0 24 24"><circle cx="12" cy="12" r="11" fill="#1a78c2" /><path d="M2 12C4 3 20 2 23 13C20 10 10 9 10 15C10 20 17 23 20 20C14 26 1 22 2 12Z" fill="#47c9a0" /></svg>,
        <svg width="24" height="22" viewBox="0 0 24 22"><path d="M1 1H9L11 4H23V21H1Z" fill="#f4c542" /><rect x="7" y="12" width="10" height="9" fill="#3d8fd8" /><rect x="10" y="16" width="4" height="5" fill="#f4c542" /></svg>,
        <svg width="24" height="24" viewBox="0 0 24 24"><circle cx="12" cy="12" r="12" fill="#e0433a" /><path d="M12 12L23 8A12 12 0 0 1 12 24Z" fill="#f5c12e" /><path d="M12 12L12 24A12 12 0 0 1 1 6Z" fill="#3aa655" /><circle cx="12" cy="12" r="5.5" fill="#fff" /><circle cx="12" cy="12" r="4.2" fill="#3b7be0" /></svg>,
        <svg width="20" height="20" viewBox="0 0 20 20"><path d="M3 1L7 5H13L17 1V17H3Z" fill="#1c3560" /><circle cx="8" cy="9" r="0.8" fill="#7fb0f0" /><circle cx="12" cy="9" r="0.8" fill="#7fb0f0" /></svg>,
        <svg width="24" height="24" viewBox="0 0 24 24"><path d="M6 2L20 4L18 23L3 20Z" fill="#7db4c6" /><path d="M6 2L20 4L19 8L5 6Z" fill="#e8f0f4" /></svg>,
        <svg width="24" height="24" viewBox="0 0 24 24"><rect x="7" y="1" width="16" height="22" fill="#1d9e5c" /><rect x="15" y="1" width="8" height="22" fill="#137a45" /><rect x="1" y="6" width="12" height="12" fill="#0d6b3a" /><text x="3.5" y="16" fontSize="10" fontWeight="bold" fill="#fff" fontFamily="Liberation Sans">X</text></svg>,
        <div className="w-[24px] h-[24px] bg-white rounded-[5px] flex items-center justify-center">
          <svg width="18" height="16" viewBox="0 0 18 16"><circle cx="9" cy="5" r="3.5" fill="none" stroke="#e0507a" strokeWidth="2" /><circle cx="5" cy="10" r="3.5" fill="none" stroke="#3a8be0" strokeWidth="2" /><circle cx="13" cy="10" r="3.5" fill="none" stroke="#3a8be0" strokeWidth="2" /></svg>
        </div>,
      ].map((ic, i) => (
        <div key={i} className="w-[49px] relative flex items-center justify-center">
          {ic}
          <div className="absolute bottom-0 left-[4px] right-[5px] h-[2px] bg-[#76b9ed]" />
        </div>
      ))}
      <div className="w-[48px] bg-[#4a5f6a] relative flex items-center justify-center">
        <div className="w-[24px] h-[24px] rounded-full bg-[#c01f2e] flex items-center justify-center text-[9px] font-bold">RAD</div>
        <div className="absolute bottom-0 left-0 right-0 h-[2px] bg-[#76b9ed]" />
      </div>

      <div className="ml-auto flex items-center">
        <div className="w-[60px] text-center text-[12px] leading-[17px] mr-[9px]">
          <div>65%</div>
          <div>内存占用</div>
        </div>
        <div className="w-[16px] h-[16px] bg-[#d0202a] flex items-center justify-center mr-[9px]"><svg width="10" height="10" viewBox="0 0 10 10"><path d="M1 1L9 4L5 5L4 9Z" fill="#fff" /></svg></div>
        <div className="w-[16px] h-[16px] rounded-[3px] bg-white flex items-center justify-center mr-[8px]"><Px r="3 4 10 3 #1a86e0;7 7 3 6 #1a86e0" size={14} /></div>
        <div className="mr-[9px]"><Px r="1 1 11 1 #fff;1 1 1 11 #fff;4 4 11 1 #fff;4 15 11 1 #fff;4 4 1 12 #fff;14 4 1 12 #fff" /></div>
        <div className="mr-[7px]"><svg width="16" height="16" viewBox="0 0 16 16"><path d="M2 1L5 4H11L14 1V15H2Z" fill="#1c3560" /></svg></div>
        <div className="w-[16px] h-[16px] rounded-[3px] bg-white flex items-center justify-center mr-[8px]"><svg width="12" height="10" viewBox="0 0 18 16"><circle cx="9" cy="5" r="3.5" fill="none" stroke="#e0507a" strokeWidth="2" /><circle cx="5" cy="10" r="3.5" fill="none" stroke="#3a8be0" strokeWidth="2" /><circle cx="13" cy="10" r="3.5" fill="none" stroke="#3a8be0" strokeWidth="2" /></svg></div>
        <div className="mr-[8px]"><Px r="0 3 7 10 #3a8be0;9 3 7 10 #9ac7ee;7 6 2 3 #fff;9 11 5 5 #d0202a" /></div>
        <div className="mr-[7px]"><Px r="0 1 8 1 #fff;0 1 1 8 #fff;0 8 6 1 #fff;6 4 10 1 #fff;6 4 1 8 #fff;15 4 1 8 #fff;6 11 10 1 #fff;10 12 1 3 #fff;7 15 7 1 #fff" /></div>
        <div className="mr-[9px] relative"><Px r="0 5 3 6 #fff;3 3 2 10 #fff;5 1 1 14 #fff;6 1 1 1 #fff" /><div className="absolute left-[8px] top-[6px] w-[9px] h-[9px] rounded-full bg-[#e0303a] text-[8px] leading-[9px] text-center">×</div></div>
        <div className="w-[28px] text-[14px]">英</div>
        <div className="w-[15px] h-[15px] bg-white text-black text-[12px] leading-[15px] text-center mr-[25px]">拼</div>
        <div className="w-[40px] text-center text-[12px] mt-[-17px]">21:54</div>
        <div className="w-[15px] h-[15px] border border-white ml-[30px] mt-[-4px] mr-[25px]" />
      </div>
      {/* watermark sits over the clock */}
      <div className="absolute left-[1793px] top-[18px] text-[17px] leading-[20px] font-bold tracking-[2px] text-[#f7c325] [text-shadow:1px_1px_1px_#000] font-['Liberation_Sans',sans-serif]">www.7pv.net</div>
    </div>
  )
}

export default function App() {
  const menu = ["File", "Edit", "Search", "View", "Refactor", "Project", "Run", "Component", "Tools", "CnPack", "Tabs", "Help"]
  return (
    <div className="relative w-[1920px] h-[1080px] overflow-hidden bg-[#ccdcec] flex flex-col font-['Noto_Sans','Noto_Sans_CJK_SC',sans-serif] text-[12px] tracking-[-0.3px]">
      {/* title bar */}
      <div className="h-[28px] shrink-0 bg-[#1763a1] flex items-center text-white">
        <div className="ml-[2px] w-[17px] h-[17px] rounded-full bg-[#c8202e] flex items-center justify-center text-[7px] font-bold">RAD</div>
        <span className="ml-[4px] text-[12.7px] tracking-normal">M2Server - RAD Studio 10.4 - FSrvValue</span>
        <div className="ml-auto w-[159px] h-[22px] border border-white flex items-center justify-between pl-[6px] pr-[4px]">
          <span>Default Layout</span>
          <Chev size={12} color="#fff" />
        </div>
        <div className="ml-[3px] w-px h-[22px] bg-[#5a90bc]" />
        <div className="ml-[6px] w-[140px] h-[22px] border border-white flex items-center justify-end pr-[2px]">
          <Search size={14} className="text-[#cfe0ee] -scale-x-100" strokeWidth={1.2} />
        </div>
        <div className="ml-[23px] w-[24px] flex items-center gap-[1px]">
          <svg width="16" height="16" viewBox="0 0 16 16" className="shrink-0">
            <path d="M4 10.5H0.5V0.5H12.5V4" fill="none" stroke="#fff" />
            <path d="M7 5C6 9 8 12 13 13C10 16 5 14 5 10" fill="none" stroke="#fff" />
          </svg>
          <div className="border-x-[3px] border-x-transparent border-t-[4px] border-t-[#cfe0ee]" />
        </div>
        <div className="ml-[28px] w-[10px] text-[#cfe0ee] text-[13px]">?</div>
        <div className="ml-[33px] w-[11px] h-px bg-white" />
        <div className="ml-[36px]"><Px r="3 1 9 1 #fff;3 1 1 2 #fff;11 1 1 9 #fff;1 3 9 1 #fff;1 3 1 10 #fff;9 3 1 10 #fff;1 12 9 1 #fff" size={14} /></div>
        <div className="ml-[32px] mr-[20px]"><CloseX color="#fff" size={11} /></div>
      </div>

      {/* menu */}
      <div className="h-[28px] shrink-0 bg-[#e6edf5] flex items-center text-[12px] text-[#111] pl-[17px] gap-[14.5px]">
        {menu.map((m) => <span key={m}>{m}</span>)}
      </div>
      <MainToolbar />

      {/* work area */}
      <div className="flex-1 min-h-0 flex pt-[8px] pb-[8px] pl-[8px] pr-[8px] gap-[8px]">
        <div className="w-[364px] shrink-0 flex flex-col">
          <StructurePanel />
          <ObjectInspector />
        </div>
        <div className="w-[1140px] shrink-0 flex flex-col">
          <div className="h-[22px] shrink-0 bg-[#e6edf5] flex items-stretch text-[12px]">
            <div className="w-[79px] flex items-center pl-[8px] justify-between pr-[5px] text-[#111]">
              <span>svMain*</span>
              <div className="w-[8px] h-[8px] rounded-full bg-[#a9c4de]" />
            </div>
            <div className="w-[88px] bg-[#1763a1] text-white flex items-center justify-between pl-[8px] pr-[7px]">
              <span>FSrvValue</span>
              <CloseX color="#fff" />
            </div>
            <div className="ml-auto mr-[6px] flex items-center"><Chev size={12} color="#222" /></div>
          </div>
          <div className="h-[2px] shrink-0 bg-[#1763a1]" />
          <DesignerToolbar />
          <Designer />
          <div className="h-[24px] shrink-0 bg-[#e6edf5] flex items-start justify-end text-[12px]">
            <div className="h-[20px] flex items-center mr-[7px] text-[#111]">Code</div>
            <div className="w-[60px] h-[20px] bg-white font-bold text-[#2a6fb0] flex items-center justify-center">Design</div>
            <div className="w-[54px] h-[20px] flex items-center justify-center text-[#111]">History</div>
          </div>
        </div>
        <div className="w-[384px] shrink-0 flex flex-col">
          <ProjectsPanel />
          <PalettePanel />
        </div>
      </div>

      <Taskbar />

      {/* baidu drop target floats above the projects toolbar */}
      <div className="absolute left-[1620px] top-[112px] w-[130px] h-[38px] rounded-[9px] border border-[#3aa0f5] bg-[#eef7ff] flex items-center overflow-hidden tracking-normal">
        <div className="w-[37px] h-full bg-[#1a8ef0] flex items-center justify-center shrink-0">
          <svg width="22" height="18" viewBox="0 0 22 18"><circle cx="11" cy="5.5" r="3.6" fill="none" stroke="#fff" strokeWidth="2.6" /><circle cx="5.5" cy="12" r="3.6" fill="none" stroke="#fff" strokeWidth="2.6" /><circle cx="16.5" cy="12" r="3.6" fill="none" stroke="#fff" strokeWidth="2.6" /></svg>
        </div>
        <span className="ml-[7px] text-[13px] font-bold text-[#1a8ef0] whitespace-nowrap">拖拽至此上传</span>
      </div>
    </div>
  )
}
